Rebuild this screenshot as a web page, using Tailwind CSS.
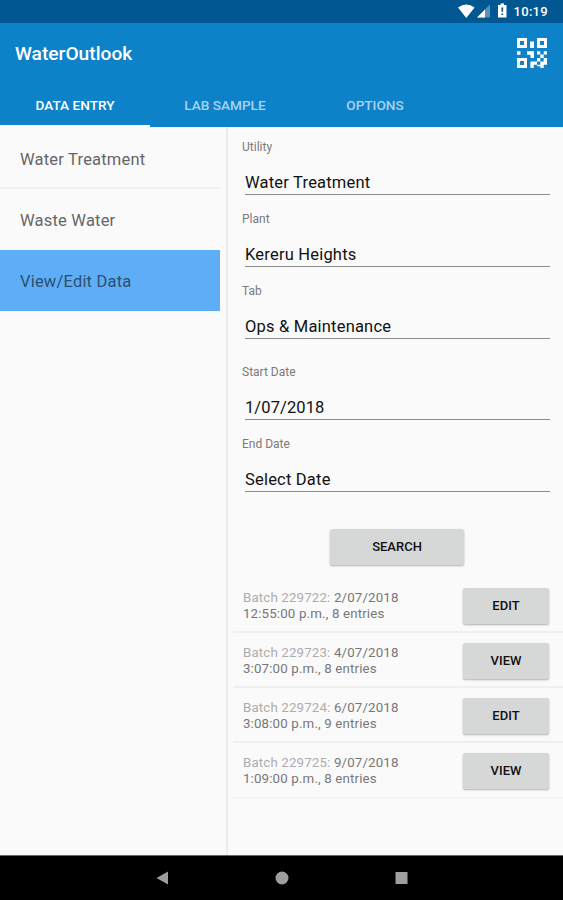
<!DOCTYPE html>
<html lang="en">
<head>
<meta charset="utf-8">
<title>WaterOutlook</title>
<script src="https://cdn.jsdelivr.net/npm/@tailwindcss/browser@4"></script>
</head>
<body class="w-[563px] h-[900px] overflow-hidden flex flex-col bg-[#fafafa] font-['Roboto',sans-serif]">
<div class="h-[23px] shrink-0 bg-[#005792] flex items-center justify-end pr-[15px] text-white">
  <svg class="w-[56px] h-[23px]" viewBox="0 0 56 23" fill="#fff">
    <path d="M0 7.500Q8.300 1.500 16.600 7.500L8.300 18Z"/>
    <path d="M32 4.500V17.500H19Z" opacity=".35"/><path d="M27 9.500V17.500H19Z"/>
    <path d="M40 5h2.500V3.500h3.500V5H48.500V17.500H40V5Z"/><path d="M43.300 7.500h2l-.4 4.500h-1.200zM43.500 13.500h1.600v1.500h-1.600z" fill="#005792"/>
  </svg>
  <span class="text-[13px] leading-[24px] font-medium tracking-[0.3px]">10:19</span>
</div>
<header class="h-[104px] shrink-0 bg-[#0e82c8] flex flex-col">
  <div class="h-[62px] flex items-center justify-between pl-[15px] pr-[16px]">
    <h1 class="text-white text-[19.2px] font-medium pt-px">WaterOutlook</h1>
    <svg class="w-[30px] h-[30px] mt-[-3px]" viewBox="0 0 30 30" fill="#fff" fill-rule="evenodd">
      <path d="M0 0h10v10H0zM3 3v4h4V3zM20 0h10v10H20zM23 3v4h4V3zM0 20h10v10H0zM3 23v4h4v-4z"/>
      <path d="M13 3.500h4V10h-4zM0 13.300h3.500v3.500H0zM10 13.300h7V20h-3.500v-3.200H10zM20 13.300h3.300v3.300H20zM26.700 13.300H30v3.300h-3.300zM23.300 16.600h3.400V20h-3.400zM20 20h3.300v3.400H20zM26.700 20H30v6.700h-3.300zM13.400 23.400H20v3.300h-3.300V30h-3.300zM23.300 23.400h3.400V30h-3.400zM20 26.700h3.300v1.500H20z"/>
    </svg>
  </div>
  <nav class="h-[42px] grid grid-cols-[150px_150px_150px] text-[13.6px] leading-[40px] font-medium text-center">
    <div class="h-[42px] text-white border-b-2 border-white">DATA ENTRY</div>
    <div class="text-[#a9d2ef]">LAB SAMPLE</div>
    <div class="text-[#a9d2ef]">OPTIONS</div>
  </nav>
</header>
<main class="flex-1 flex">
  <aside class="w-[228px] shrink-0 border-r-2 border-[#ececec] pr-[6px] text-[16.5px] tracking-[0.2px] text-[#666]">
    <div class="h-[62px] pl-5 pt-px leading-[63px] border-b-2 border-[#f1f1f1]">Water Treatment</div>
    <div class="h-[61px] pl-5 leading-[63px]">Waste Water</div>
    <div class="h-[61px] pl-5 leading-[63px] bg-[#5eaef7] text-[#2c4f70]">View/Edit Data</div>
  </aside>
  <section class="flex-1 pt-3">
    <div class="pl-[14px] pr-[13px] text-[12px] text-[#7b7b7b]">
      <div class="h-[72px]"><div class="h-4 leading-4">Utility</div><div class="ml-[3px] h-[40px] pt-[4px] leading-[47px] border-b border-[#8c8c8c] text-[16.5px] tracking-[0.2px] text-[#111]"><span class="block h-8">Water Treatment</span></div></div>
      <div class="h-[72px]"><div class="h-4 leading-4">Plant</div><div class="ml-[3px] h-[40px] pt-[4px] leading-[47px] border-b border-[#8c8c8c] text-[16.5px] tracking-[0.2px] text-[#111]"><span class="block h-8">Kereru Heights</span></div></div>
      <div class="h-[72px]"><div class="h-4 leading-4">Tab</div><div class="ml-[3px] h-[40px] pt-[4px] leading-[47px] border-b border-[#8c8c8c] text-[16.5px] tracking-[0.2px] text-[#111]"><span class="block h-8">Ops &amp; Maintenance</span></div></div>
      <div class="h-[72px] mt-[9px]"><div class="h-4 leading-4">Start Date</div><div class="ml-[3px] h-[40px] pt-[4px] leading-[47px] border-b border-[#8c8c8c] text-[16.5px] tracking-[0.1px] text-[#111]"><span class="block h-8">1/07/2018</span></div></div>
      <div class="h-[72px]"><div class="h-4 leading-4">End Date</div><div class="ml-[3px] h-[40px] pt-[4px] leading-[47px] border-b border-[#8c8c8c] text-[16.5px] tracking-[0.2px] text-[#111]"><span class="block h-8">Select Date</span></div></div>
    </div>
    <button class="block ml-[102px] mt-[21px] w-[134px] h-[36px] rounded-[2px] bg-[#d6d7d7] shadow-[0_1px_2px_rgba(0,0,0,0.3)] text-[13px] font-medium text-[#111]">SEARCH</button>
    <div class="mt-[13px] ml-[5px] text-[13.3px] leading-4 tracking-[0.15px] text-[#777]">
      <div class="h-[55px] flex justify-between pl-[10px] pr-[14px] border-b-2 border-[#efefef]"><div class="pt-[12px]"><span class="text-[#adadad]">Batch 229722:</span> 2/07/2018<br>12:55:00 p.m., 8 entries</div><button class="mt-[10px] w-[86px] h-[36px] rounded-[2px] bg-[#d6d7d7] shadow-[0_1px_2px_rgba(0,0,0,0.3)] text-[13px] font-medium tracking-normal text-[#111]">EDIT</button></div>
      <div class="h-[55px] flex justify-between pl-[10px] pr-[14px] border-b-2 border-[#efefef]"><div class="pt-[12px]"><span class="text-[#adadad]">Batch 229723:</span> 4/07/2018<br>3:07:00 p.m., 8 entries</div><button class="mt-[10px] w-[86px] h-[36px] rounded-[2px] bg-[#d6d7d7] shadow-[0_1px_2px_rgba(0,0,0,0.3)] text-[13px] font-medium tracking-normal text-[#111]">VIEW</button></div>
      <div class="h-[55px] flex justify-between pl-[10px] pr-[14px] border-b-2 border-[#efefef]"><div class="pt-[12px]"><span class="text-[#adadad]">Batch 229724:</span> 6/07/2018<br>3:08:00 p.m., 9 entries</div><button class="mt-[10px] w-[86px] h-[36px] rounded-[2px] bg-[#d6d7d7] shadow-[0_1px_2px_rgba(0,0,0,0.3)] text-[13px] font-medium tracking-normal text-[#111]">EDIT</button></div>
      <div class="h-[55px] flex justify-between pl-[10px] pr-[14px] border-b border-[#f3f3f3]"><div class="pt-[12px]"><span class="text-[#adadad]">Batch 229725:</span> 9/07/2018<br>1:09:00 p.m., 8 entries</div><button class="mt-[10px] w-[86px] h-[36px] rounded-[2px] bg-[#d6d7d7] shadow-[0_1px_2px_rgba(0,0,0,0.3)] text-[13px] font-medium tracking-normal text-[#111]">VIEW</button></div>
    </div>
  </section>
</main>
<footer class="h-[45px] shrink-0 bg-black border-t border-[#666] flex items-center justify-center">
  <svg class="w-[252px] h-[14px]" viewBox="0 0 252 14" fill="#9e9e9e"><path d="M.5 7L12 .5v13z"/><circle cx="126" cy="7" r="6.500"/><path d="M239.500 1h12v12h-12z"/></svg>
</footer>
</body>
</html>
